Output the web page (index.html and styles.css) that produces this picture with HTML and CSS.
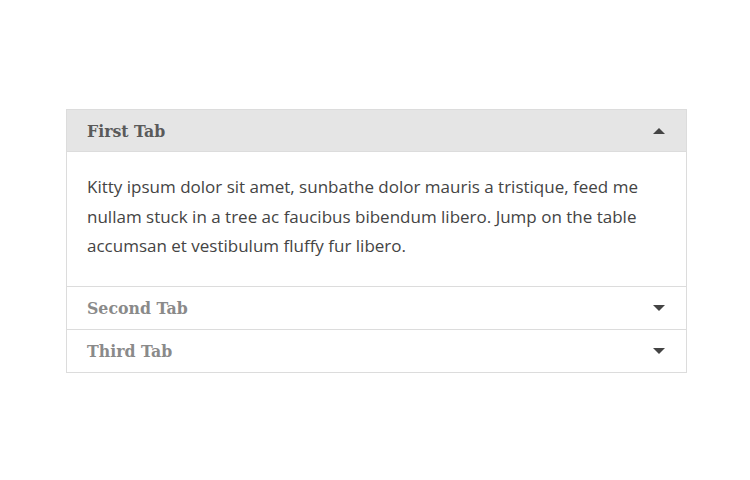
FILE: index.html
```html
<!DOCTYPE html>
<html>
<head>
<meta charset="utf-8">
<link rel="stylesheet" href="styles.css">
</head>
<body>
<div class="accordion">
  <div class="item open">
    <div class="head">
      <span class="title">First Tab</span>
      <span class="arrow up"></span>
    </div>
    <div class="content">
      <p>Kitty ipsum dolor sit amet, sunbathe dolor mauris a tristique, feed me nullam stuck in a tree ac faucibus bibendum libero. Jump on the table accumsan et vestibulum fluffy fur libero.</p>
    </div>
  </div>
  <div class="item">
    <div class="head">
      <span class="title">Second Tab</span>
      <span class="arrow down"></span>
    </div>
  </div>
  <div class="item">
    <div class="head">
      <span class="title">Third Tab</span>
      <span class="arrow down"></span>
    </div>
  </div>
</div>
</body>
</html>
```
FILE: styles.css
```css
html, body {
  margin: 0;
  padding: 0;
  background: #fff;
}
body {
  padding: 109px 0 0 66px;
}
.accordion {
  width: 619px;
  border: 1px solid #dcdcdc;
}
.item + .item {
  border-top: 1px solid #dcdcdc;
}
.head {
  height: 42px;
  display: flex;
  align-items: center;
  justify-content: space-between;
  padding: 0 21px 0 20px;
  box-sizing: border-box;
}
.open .head {
  background: #e5e5e5;
  border-bottom: 1px solid #dcdcdc;
}
.title {
  font-family: "DejaVu Serif Condensed", "DejaVu Serif", serif;
  font-weight: bold;
  font-size: 17.5px;
  color: #8a8a8a;
}
.open .title {
  color: #5a5a5a;
}
.arrow {
  width: 0;
  height: 0;
  border-left: 6px solid transparent;
  border-right: 6px solid transparent;
}
.arrow.up {
  border-bottom: 6px solid #444;
}
.arrow.down {
  border-top: 6px solid #444;
}
.content {
  padding: 20px 20px 25px 20px;
}
.content p {
  margin: 0;
  font-family: "Open Sans", sans-serif;
  font-size: 17px;
  line-height: 29.5px;
  color: #444;
}
```
